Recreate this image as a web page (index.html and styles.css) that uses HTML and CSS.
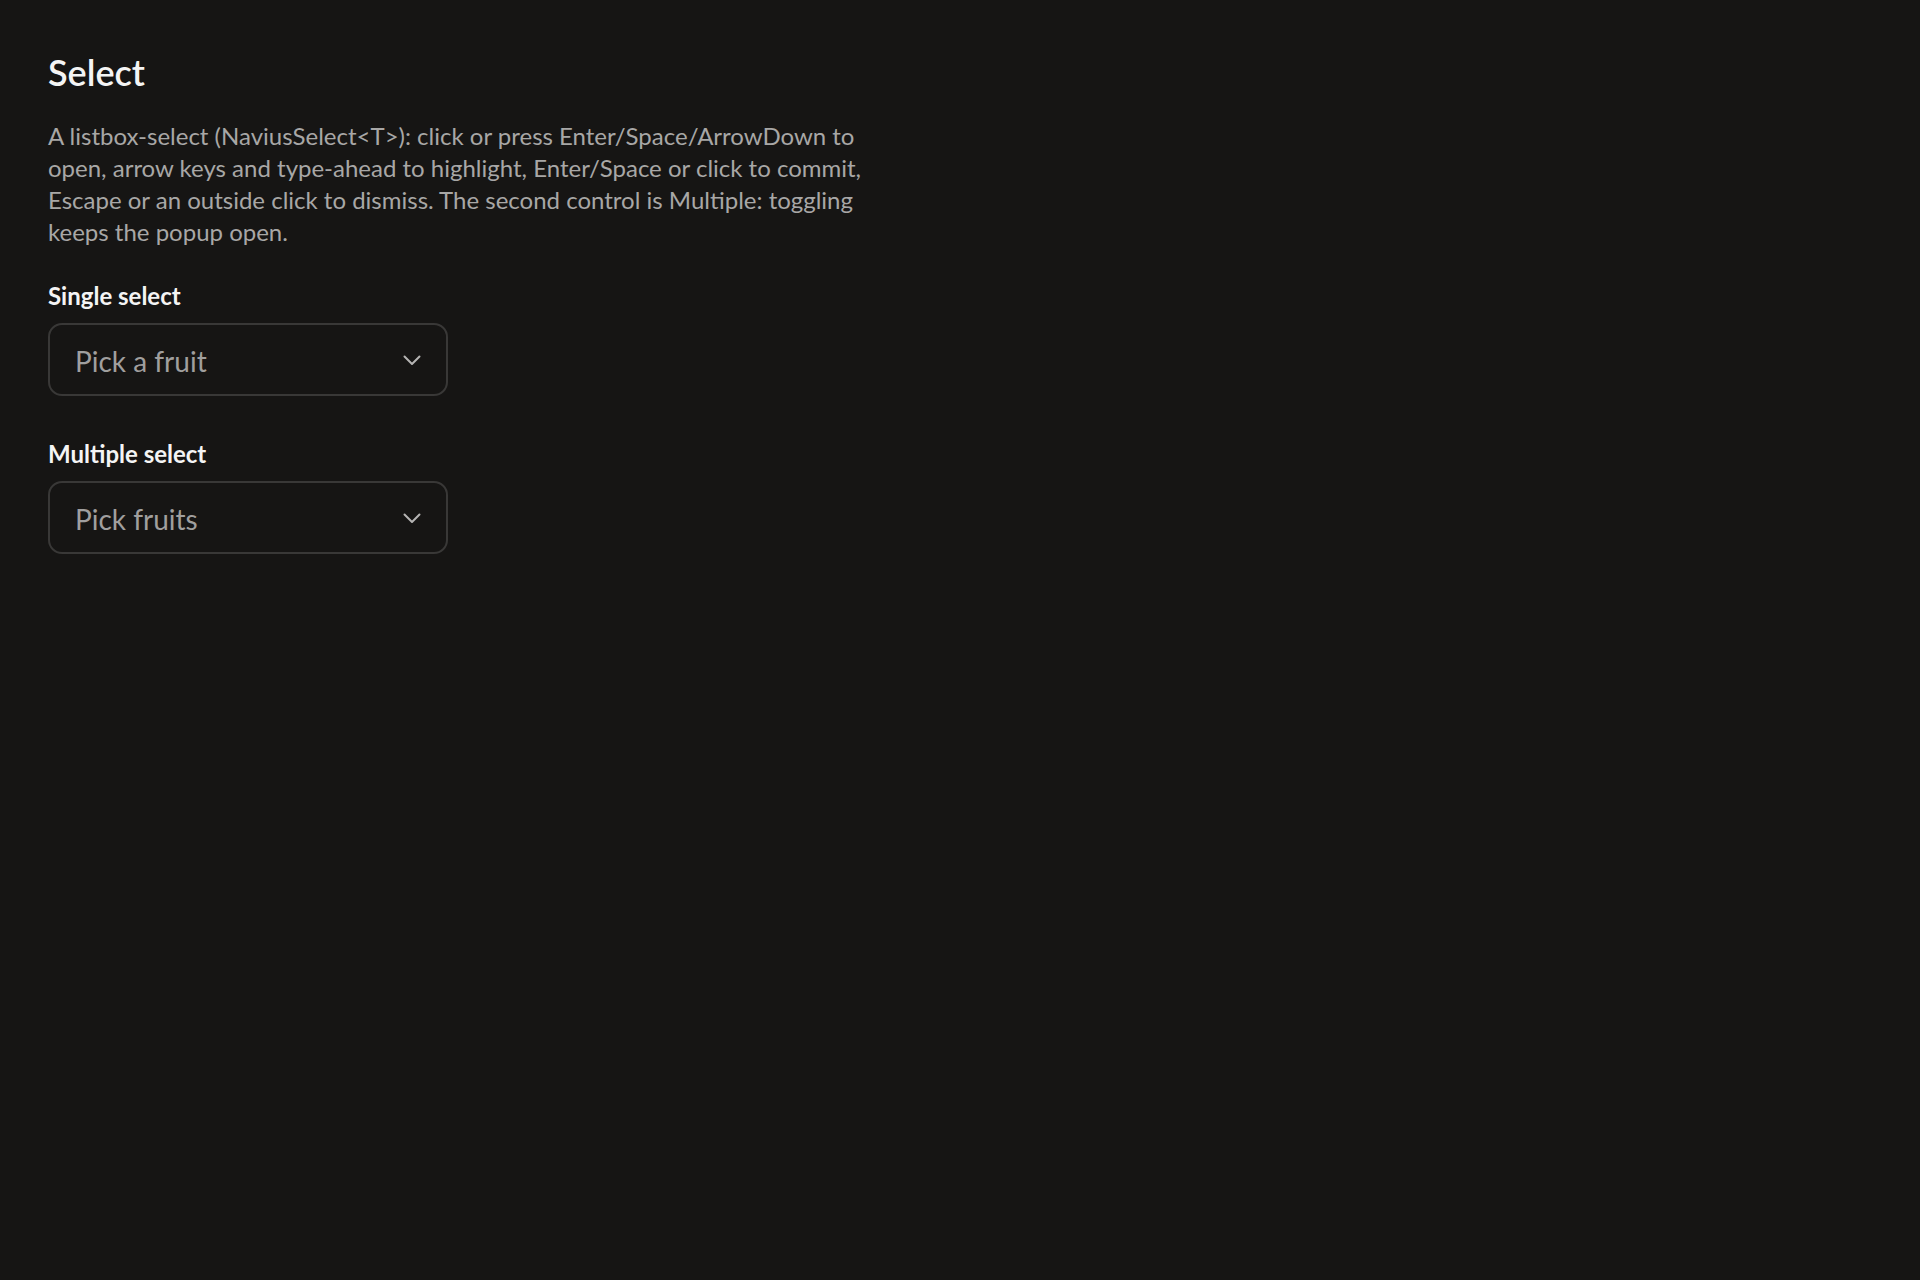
FILE: index.html
```html
<!DOCTYPE html>
<html lang="en">
<head>
  <meta charset="UTF-8" />
  <meta name="viewport" content="width=device-width, initial-scale=1.0"/>
  <title>Select</title>
  <link rel="stylesheet" href="styles.css">
</head>
<body>
  <main class="page">
    <h1>Select</h1>
    <p class="desc">A listbox-select (NaviusSelect&lt;T&gt;): click or press Enter/Space/ArrowDown to open, arrow keys and type-ahead to highlight, Enter/Space or click to commit, Escape or an outside click to dismiss. The second control is Multiple: toggling keeps the popup open.</p>

    <div class="field">
      <label class="field-label" for="single">Single select</label>
      <button class="select" id="single" type="button">
        <span class="placeholder">Pick a fruit</span>
        <svg class="chevron" width="20" height="20" viewBox="0 0 20 20" fill="none"><path d="M2.5 6.5 L10 14 L17.5 6.5" stroke="currentColor" stroke-width="2" stroke-linecap="round" stroke-linejoin="round"/></svg>
      </button>
    </div>

    <div class="field">
      <label class="field-label" for="multi">Multiple select</label>
      <button class="select" id="multi" type="button">
        <span class="placeholder">Pick fruits</span>
        <svg class="chevron" width="20" height="20" viewBox="0 0 20 20" fill="none"><path d="M2.5 6.5 L10 14 L17.5 6.5" stroke="currentColor" stroke-width="2" stroke-linecap="round" stroke-linejoin="round"/></svg>
      </button>
    </div>
  </main>
</body>
</html>
```

FILE: styles.css
```css
html, body {
  margin: 0;
  padding: 0;
}
body {
  background: #161514;
  color: #f2f2f2;
  font-family: Lato, "Noto Sans", sans-serif;
  min-height: 100vh;
}
.page {
  padding: 48px;
  display: flex;
  flex-direction: column;
}
h1 {
  margin: 0;
  font-size: 36px;
  font-weight: 600;
  line-height: 48px;
  color: #f4f4f4;
}
.desc {
  margin: 24px 0 0;
  max-width: 850px;
  font-size: 24px;
  line-height: 32px;
  color: #a8a7a6;
}
.field {
  display: flex;
  flex-direction: column;
  gap: 13px;
  margin-top: 34px;
}
.field + .field {
  margin-top: 44px;
}
.field-label {
  font-size: 24px;
  font-weight: 700;
  line-height: 28px;
  color: #f4f4f4;
}
.select {
  box-sizing: border-box;
  width: 400px;
  height: 73px;
  display: flex;
  align-items: center;
  justify-content: space-between;
  padding: 2px 24px 0 25px;
  background: #161514;
  border: 2px solid #393837;
  border-radius: 14px;
  font-family: inherit;
  cursor: pointer;
}
.placeholder {
  font-size: 28px;
  color: #a09f9e;
}
.chevron {
  color: #b5b4b3;
  margin-top: -2px;
}
```
